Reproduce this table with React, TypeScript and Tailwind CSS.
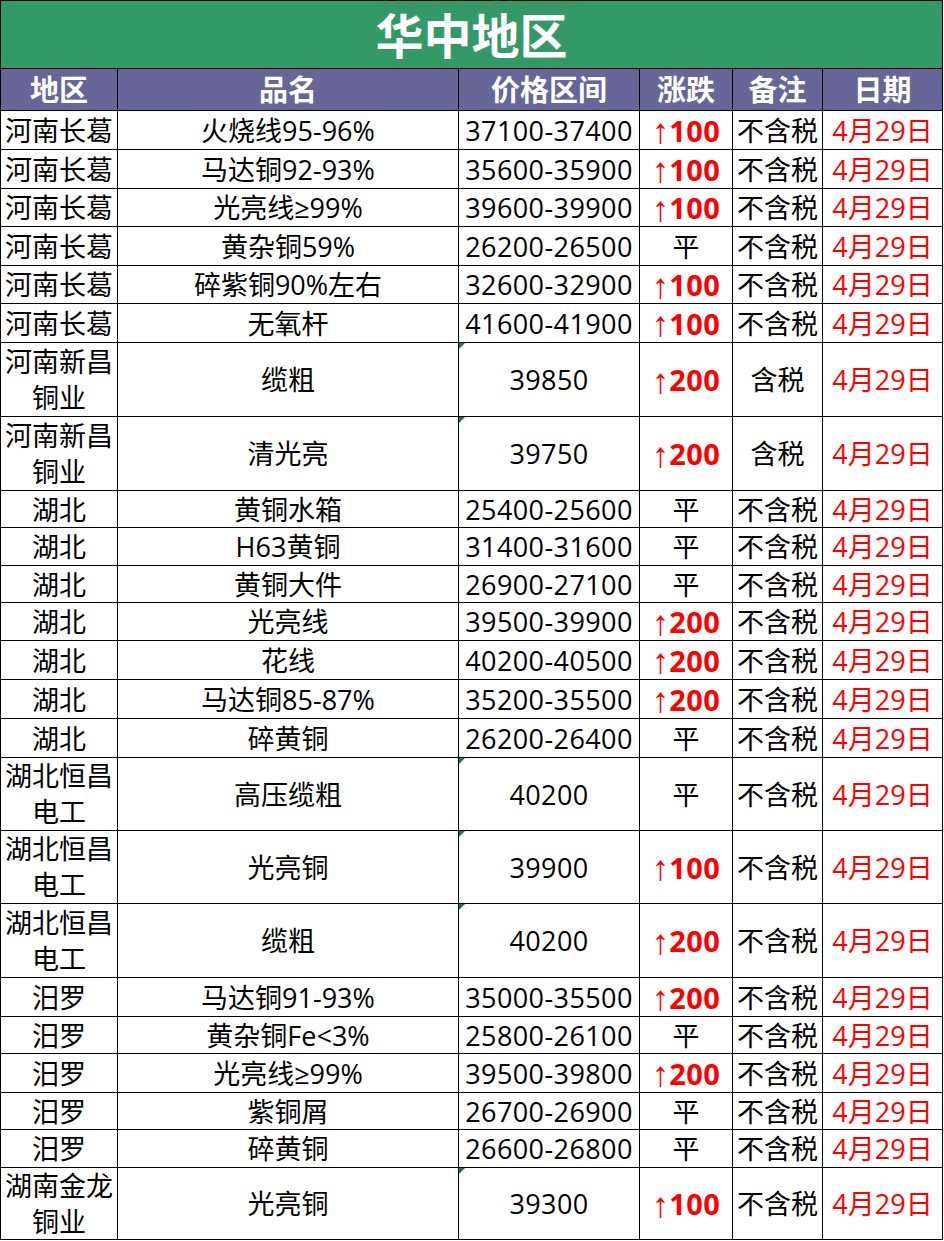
import React from "react";

type Row = {
  region: string[];
  name: string;
  price: string;
  change: string; // "" for 平
  note: string;
  h: string;
  tall?: boolean;
};

const rows: Row[] = [
  { region: ["河南长葛"], name: "火烧线95-96%", price: "37100-37400", change: "100", note: "不含税", h: "h-[38px]" },
  { region: ["河南长葛"], name: "马达铜92-93%", price: "35600-35900", change: "100", note: "不含税", h: "h-[38px]" },
  { region: ["河南长葛"], name: "光亮线≥99%", price: "39600-39900", change: "100", note: "不含税", h: "h-[37px]" },
  { region: ["河南长葛"], name: "黄杂铜59%", price: "26200-26500", change: "", note: "不含税", h: "h-[38px]" },
  { region: ["河南长葛"], name: "碎紫铜90%左右", price: "32600-32900", change: "100", note: "不含税", h: "h-[37px]" },
  { region: ["河南长葛"], name: "无氧杆", price: "41600-41900", change: "100", note: "不含税", h: "h-[38px]" },
  { region: ["河南新昌", "铜业"], name: "缆粗", price: "39850", change: "200", note: "含税", h: "h-[73px]", tall: true },
  { region: ["河南新昌", "铜业"], name: "清光亮", price: "39750", change: "200", note: "含税", h: "h-[73px]", tall: true },
  { region: ["湖北"], name: "黄铜水箱", price: "25400-25600", change: "", note: "不含税", h: "h-[36px]" },
  { region: ["湖北"], name: "H63黄铜", price: "31400-31600", change: "", note: "不含税", h: "h-[37px]" },
  { region: ["湖北"], name: "黄铜大件", price: "26900-27100", change: "", note: "不含税", h: "h-[36px]" },
  { region: ["湖北"], name: "光亮线", price: "39500-39900", change: "200", note: "不含税", h: "h-[37px]" },
  { region: ["湖北"], name: "花线", price: "40200-40500", change: "200", note: "不含税", h: "h-[38px]" },
  { region: ["湖北"], name: "马达铜85-87%", price: "35200-35500", change: "200", note: "不含税", h: "h-[38px]" },
  { region: ["湖北"], name: "碎黄铜", price: "26200-26400", change: "", note: "不含税", h: "h-[38px]" },
  { region: ["湖北恒昌", "电工"], name: "高压缆粗", price: "40200", change: "", note: "不含税", h: "h-[72px]", tall: true },
  { region: ["湖北恒昌", "电工"], name: "光亮铜", price: "39900", change: "100", note: "不含税", h: "h-[72px]", tall: true },
  { region: ["湖北恒昌", "电工"], name: "缆粗", price: "40200", change: "200", note: "不含税", h: "h-[73px]", tall: true },
  { region: ["汨罗"], name: "马达铜91-93%", price: "35000-35500", change: "200", note: "不含税", h: "h-[38px]" },
  { region: ["汨罗"], name: "黄杂铜Fe<3%", price: "25800-26100", change: "", note: "不含税", h: "h-[36px]" },
  { region: ["汨罗"], name: "光亮线≥99%", price: "39500-39800", change: "200", note: "不含税", h: "h-[38px]" },
  { region: ["汨罗"], name: "紫铜屑", price: "26700-26900", change: "", note: "不含税", h: "h-[36px]" },
  { region: ["汨罗"], name: "碎黄铜", price: "26600-26800", change: "", note: "不含税", h: "h-[37px]" },
  { region: ["湖南金龙", "铜业"], name: "光亮铜", price: "39300", change: "100", note: "不含税", h: "h-[71px]", tall: true },
];

const headers = ["地区", "品名", "价格区间", "涨跌", "备注", "日期"];

const font = "font-['Open_Sans','Noto_Sans_CJK_SC',sans-serif]";

function Cell({ h, children, className = "" }: { h: string; children: React.ReactNode; className?: string }) {
  return (
    <div className={`${h} bg-white flex items-center justify-center relative whitespace-nowrap ${className}`}>
      {children}
    </div>
  );
}

export default function App() {
  return (
    <div className={`w-[944px] h-[1241px] bg-white ${font}`}>
      <div className="grid grid-cols-[116px_340px_180px_92px_89px_119px] gap-px bg-black border border-black w-[943px]">
        <div className="col-span-6 h-[67px] bg-[#339966] flex items-center justify-center text-white font-bold text-[48px] leading-none pt-[2px]">
          华中地区
        </div>
        {headers.map((t) => (
          <div key={t} className="h-[41px] bg-[#666699] flex items-center justify-center text-white font-bold text-[29px] leading-none">
            {t}
          </div>
        ))}
        {rows.map((r, i) => (
          <React.Fragment key={i}>
            <Cell h={r.h} className="text-[27px] text-black">
              {r.region.length > 1 ? (
                <div className="flex flex-col items-center leading-[36px]">
                  <span>{r.region[0]}</span>
                  <span>{r.region[1]}</span>
                </div>
              ) : (
                <span className="leading-none">{r.region[0]}</span>
              )}
            </Cell>
            <Cell h={r.h} className="text-[27px] text-black leading-none">
              {r.name}
            </Cell>
            <Cell h={r.h} className="text-[27px] text-black leading-none tracking-[0.4px]">
              {r.tall && (
                <span className="absolute left-0 top-0 w-0 h-0 border-t-[6px] border-t-[#1e7b34] border-r-[6px] border-r-transparent" />
              )}
              {r.price}
            </Cell>
            <Cell h={r.h} className="text-[27px] leading-none">
              {r.change ? (
                <span className="text-[#ff0000] flex items-center">
                  <span className="font-normal font-['Liberation_Sans',sans-serif] text-[35px] leading-none pt-[1px]">↑</span>
                  <span className="font-bold text-[29px] tracking-[0.5px] leading-none">{r.change}</span>
                </span>
              ) : (
                <span className="text-black">平</span>
              )}
            </Cell>
            <Cell h={r.h} className="text-[27px] text-black leading-none">
              {r.note}
            </Cell>
            <Cell h={r.h} className="text-[27px] text-[#ff0000] leading-none">
              4月29日
            </Cell>
          </React.Fragment>
        ))}
      </div>
    </div>
  );
}
